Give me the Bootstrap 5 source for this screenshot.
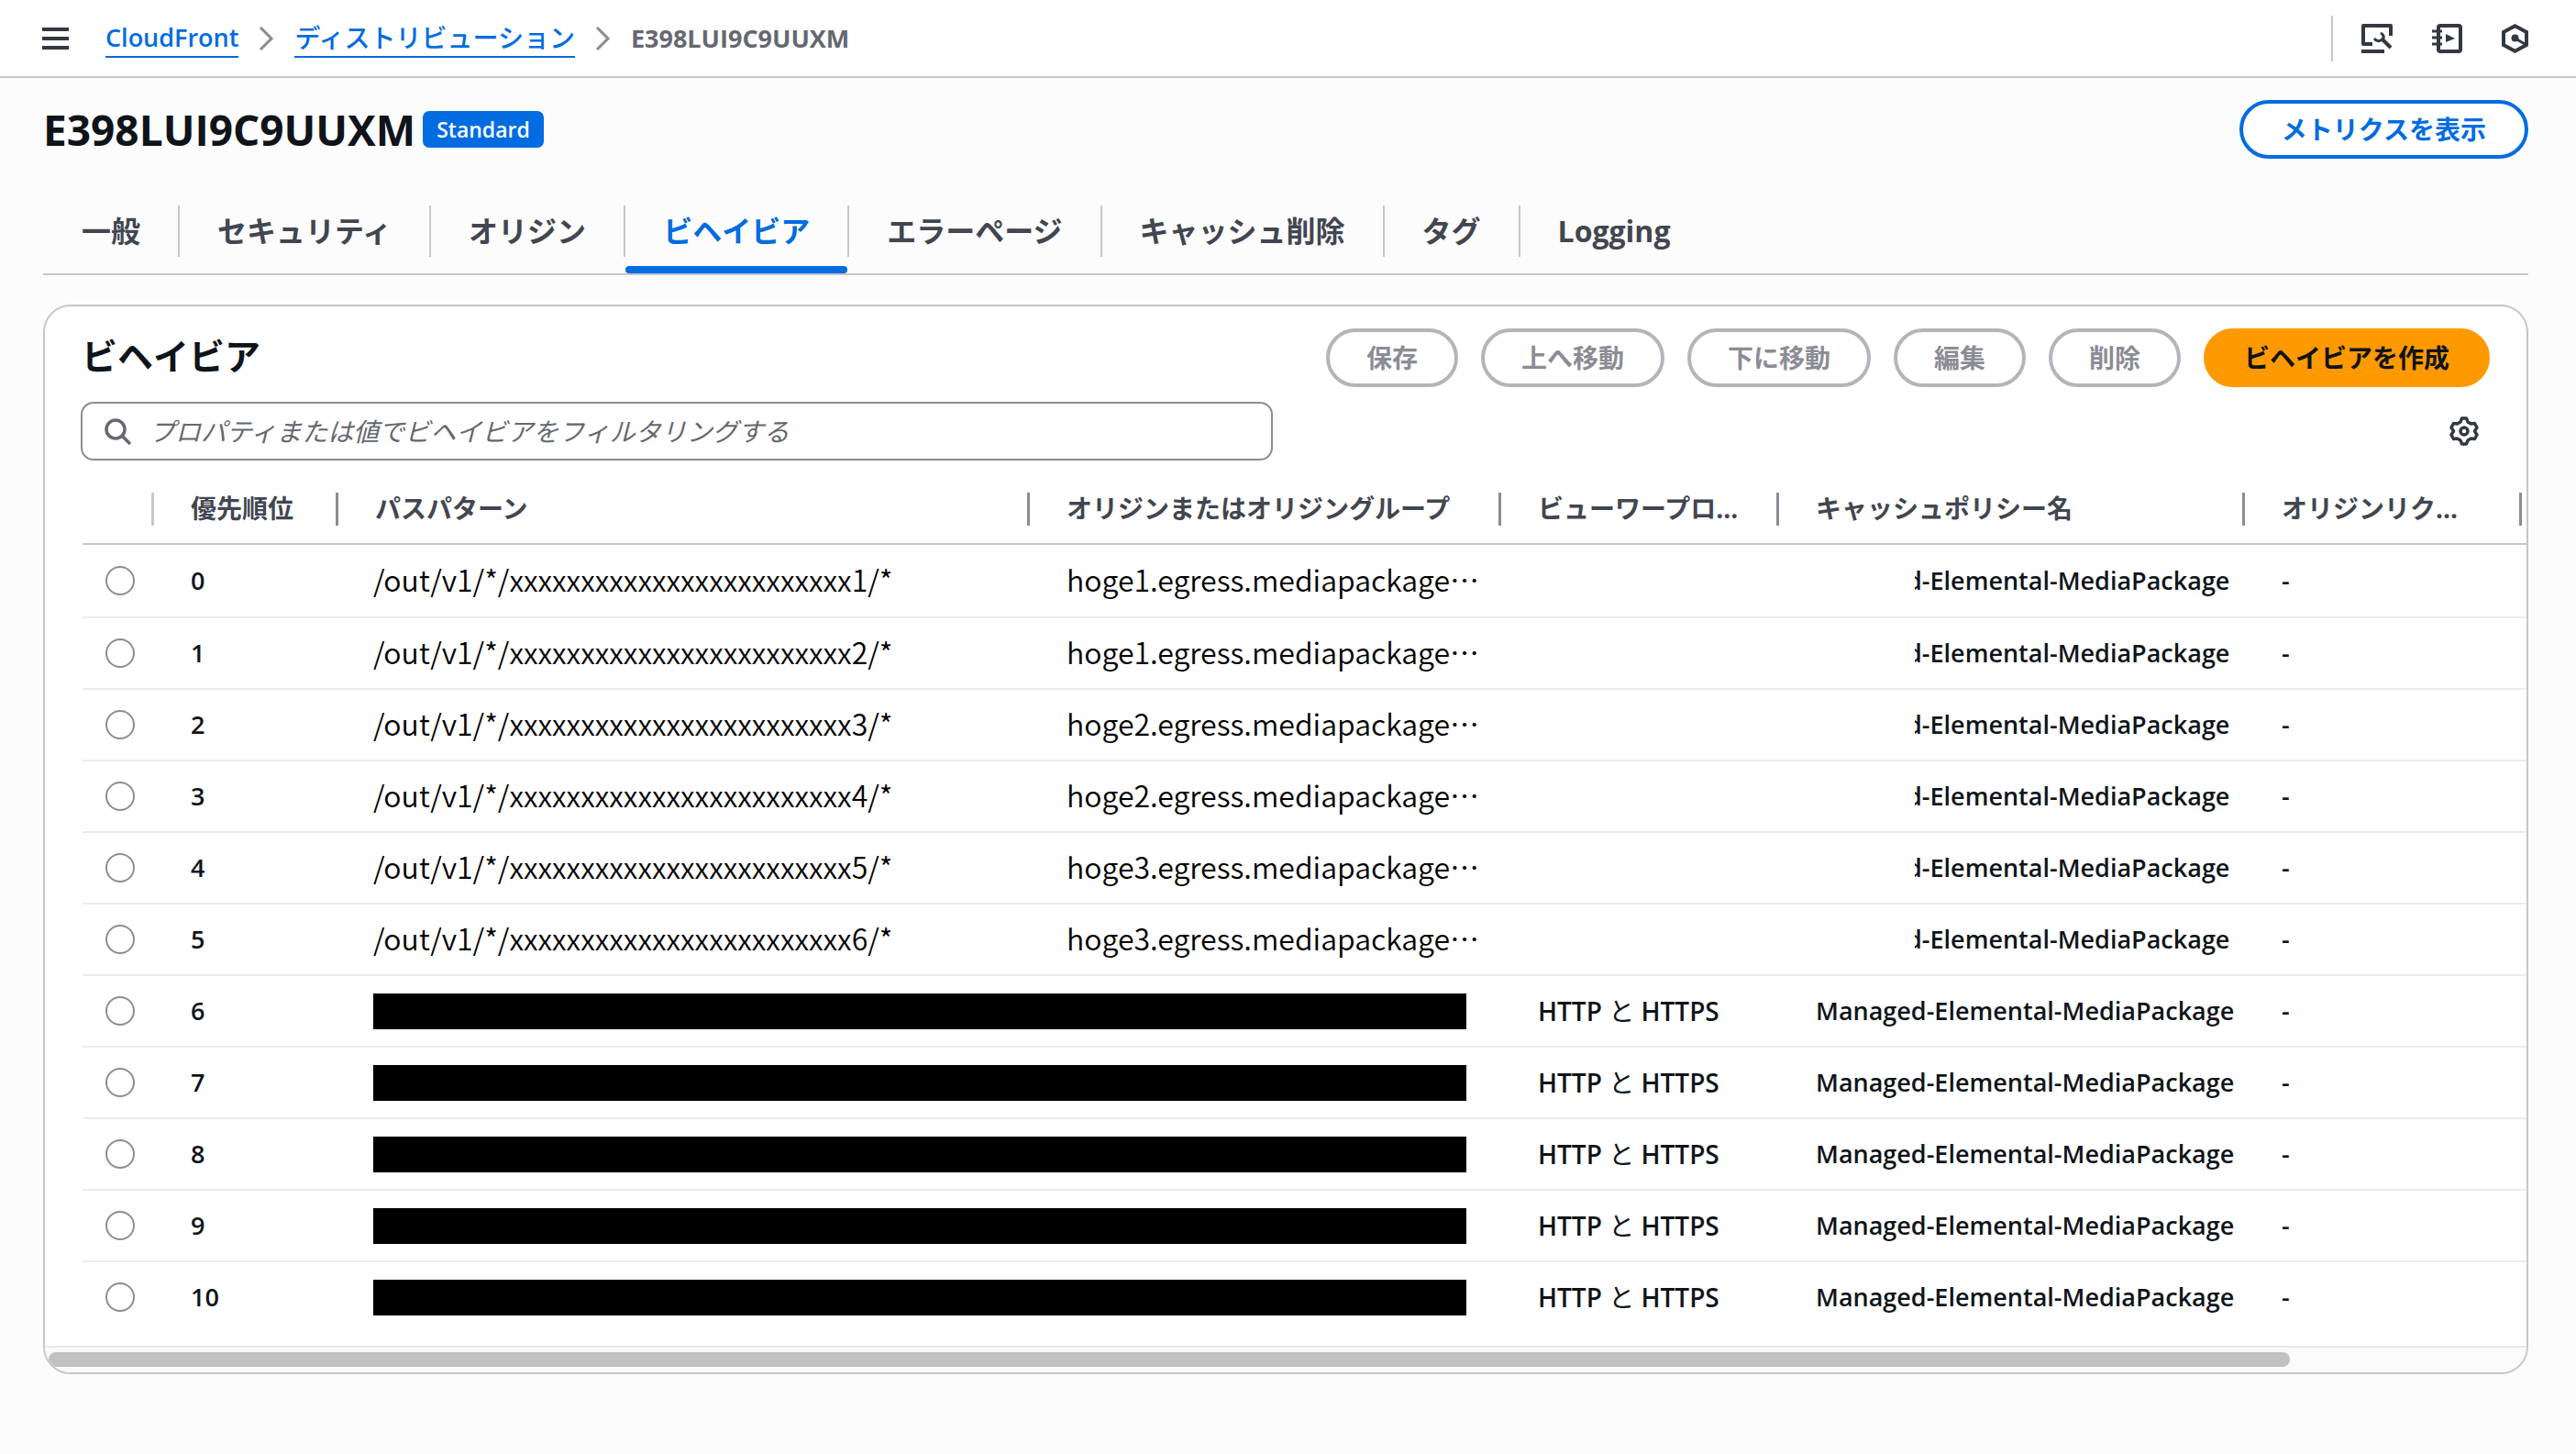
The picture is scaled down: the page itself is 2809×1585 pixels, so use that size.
<!DOCTYPE html>
<html lang="ja">
<head>
<meta charset="utf-8">
<meta name="viewport" content="width=device-width, initial-scale=1">
<title>CloudFront - E398LUI9C9UUXM</title>
<link rel="stylesheet" href="https://cdn.jsdelivr.net/npm/bootstrap@5.3.0/dist/css/bootstrap.min.css">
<style>
  :root { --blue:#006ce0; --ink:#0f141a; --slate:#424650; --muted:#656871; --gray:#8c8c94; --line:#c6c6cd; }
  body { background:#fcfcfd; color:var(--ink); font-family:"Open Sans","Noto Sans CJK JP",sans-serif; font-size:28px; line-height:40px; font-weight:500; }
  svg { display:block; flex:none; }
  .icon-btn { background:none; border:0; padding:0; color:#333843; }
  .topbar { background:#fff; border-bottom:2px solid var(--line); height:85px; padding:0 52px 0 46px; }
  .crumbs { gap:22px; margin-left:40px; }
  .crumbs a { color:var(--blue); text-decoration:none; border-bottom:2px solid var(--blue); }
  .crumbs .here { color:var(--muted); font-size:27px; font-weight:700; }
  .crumbs .service { font-size:27px; font-weight:600; }
  .tools { gap:43px; }
  .tools .rule { width:2px; height:50px; background:var(--line); margin-right:-12px; }
  .page { padding:24px 52px 40px 47px; }
  .page-title { font-size:46px; line-height:64px; font-weight:700; }
  .tier { background:var(--blue); font-size:23px; line-height:40px; font-weight:600; border-radius:7px; padding:0 15px; }
  .pill { border:4px solid; border-radius:32px; height:64px; padding:0 40px; font-size:28px; line-height:40px; font-weight:700; white-space:nowrap; }
  .pill-blue { color:var(--blue); border-color:var(--blue); background:#fff; padding:0 42px; }
  .pill:disabled { color:var(--gray); border-color:#b4b4bb; background:#fff; opacity:1; }
  .pill-orange { color:var(--ink); background:#f90; border-color:#f90; }
  .tabs { margin-top:51px; border-bottom:2px solid var(--line); font-size:32px; }
  .tabs li { padding-bottom:18px; position:relative; }
  .tabs a { display:block; line-height:56px; padding:0 41px; color:var(--slate); font-weight:700; text-decoration:none; }
  .tabs li:first-child a { padding-left:42px; }
  .tabs li + li a { border-left:2px solid var(--line); }
  .tabs .on a { color:var(--blue); }
  .tabs .on::after { content:""; position:absolute; left:2px; right:0; bottom:0; height:8px; border-radius:4px; background:var(--blue); }
  .panel { margin-top:32px; background:#fff; border:2px solid var(--line); border-radius:30px; overflow:hidden; }
  .panel-head { padding:24px 40px 0 40px; }
  .panel-title { font-size:39px; line-height:60px; font-weight:700; }
  .actions { gap:25px; }
  .filter-row { padding:16px 52px 0 39px; }
  .filter { border:2px solid var(--gray); border-radius:14px; height:64px; width:1300px; padding:0 24px; gap:20px; color:var(--muted); }
  .filter input { border:0; outline:0; background:none; padding:0; font-style:italic; color:var(--muted); font-weight:400; }
  .filter input::placeholder { color:var(--muted); opacity:1; }
  .grid-wrap { padding-left:41px; margin-top:16px; }
  .grid { table-layout:fixed; width:100%; white-space:nowrap; }
  .grid th { height:75px; padding:0 0 2px 40px; border-bottom:2px solid var(--line); color:var(--slate); font-weight:700; position:relative; overflow:hidden; }
  .grid th:not(:last-child)::after { content:""; position:absolute; right:0; top:19px; width:3px; height:36px; background:var(--gray); }
  .grid th:first-child::after { background:var(--line); }
  .grid td { height:78px; padding:0 0 0 40px; border-bottom:2px solid #ebebf0; font-size:27px; font-weight:600; overflow:hidden; }
  .grid tbody tr:first-child td { height:80px; }
  .grid tbody tr:last-child td { border-bottom-color:#fff; }
  .grid td:first-child { padding-left:25px; }
  .grid td:nth-child(3) { padding-left:38px; }
  .grid input { appearance:none; display:block; width:32px; height:32px; margin:0; border:2px solid var(--gray); border-radius:50%; background:#fff; }
  .grid td.plain { font-family:"Noto Sans CJK JP",sans-serif; font-size:32px; font-weight:350; color:#000; padding-bottom:4px; }
  .grid td.proto { font-size:28px; }
  .redacted { height:39px; margin-right:38px; background:#000; }
  .cut { position:relative; display:block; margin-left:99px; }
  .cut::before { content:""; position:absolute; left:0; top:0; bottom:0; width:9px; background:#fff; }
  .scroll-track { margin-top:13px; height:29px; border-top:2px solid #e8e8e8; background:#fafafa; padding:5px 4px; }
  .scroll-thumb { height:16px; width:90.6%; border-radius:8px; background:#c1c1c1; }
</style>
</head>
<body>
<header class="topbar d-flex align-items-center">
  <button class="icon-btn" type="button" aria-label="メニュー">
    <svg width="29" height="24" viewBox="0 0 29 24" fill="currentColor"><path d="M0 0h29v4H0zM0 10h29v4H0zM0 20h29v4H0z"/></svg>
  </button>
  <nav class="crumbs d-flex align-items-center" aria-label="パンくずリスト">
    <a class="service" href="#">CloudFront</a>
    <svg width="17" height="26" viewBox="0 0 17 26" fill="none" stroke="#8c8c94" stroke-width="3"><path d="M2 1l12 12L2 25"/></svg>
    <a href="#">ディストリビューション</a>
    <svg width="17" height="26" viewBox="0 0 17 26" fill="none" stroke="#8c8c94" stroke-width="3"><path d="M2 1l12 12L2 25"/></svg>
    <span class="here">E398LUI9C9UUXM</span>
  </nav>
  <div class="tools d-flex align-items-center ms-auto">
    <span class="rule"></span>
    <button class="icon-btn" type="button" aria-label="診断">
      <svg width="34" height="32" viewBox="0 0 34 32" fill="none" stroke="currentColor" stroke-width="4" stroke-linejoin="round"><path d="M12 22H2V2h30v11M0 30h25"/><path d="M14 16q3 4 7 2 4-2 3-5-1-2-3-3" stroke-width="3"/><path d="M23 17l9 9"/></svg>
    </button>
    <button class="icon-btn" type="button" aria-label="チュートリアル">
      <svg width="33" height="32" viewBox="0 0 33 32" fill="none" stroke="currentColor" stroke-width="4"><rect x="7" y="2" width="24" height="28" rx="2"/><path d="M0 8h11M0 15h11M0 22h11" stroke-width="3"/><path d="M15 11v9l10-4z" fill="currentColor" stroke="none"/></svg>
    </button>
    <button class="icon-btn" type="button" aria-label="アシスタント">
      <svg width="29" height="32" viewBox="0 0 29 32" fill="none" stroke="currentColor" stroke-width="4"><path d="M14.500 2.300L27 9v14l-12.500 6.700L2 23V9z"/><circle cx="14.500" cy="15.500" r="4" fill="currentColor" stroke="none"/><path d="M15 16l11 6.500" stroke-width="3"/></svg>
    </button>
  </div>
</header>
<main class="page">
  <div class="d-flex align-items-center">
    <h1 class="page-title mb-0">E398LUI9C9UUXM</h1>
    <span class="tier text-white ms-2">Standard</span>
    <button class="pill pill-blue ms-auto" type="button">メトリクスを表示</button>
  </div>
  <ul class="tabs d-flex list-unstyled mb-0">
    <li><a href="#">一般</a></li>
    <li><a href="#">セキュリティ</a></li>
    <li><a href="#">オリジン</a></li>
    <li class="on"><a href="#" aria-current="page">ビヘイビア</a></li>
    <li><a href="#">エラーページ</a></li>
    <li><a href="#">キャッシュ削除</a></li>
    <li><a href="#">タグ</a></li>
    <li><a href="#">Logging</a></li>
  </ul>
  <section class="panel">
    <div class="panel-head d-flex align-items-start justify-content-between">
      <h2 class="panel-title mb-0">ビヘイビア</h2>
      <div class="actions d-flex">
        <button class="pill" type="button" disabled>保存</button>
        <button class="pill" type="button" disabled>上へ移動</button>
        <button class="pill" type="button" disabled>下に移動</button>
        <button class="pill" type="button" disabled>編集</button>
        <button class="pill" type="button" disabled>削除</button>
        <button class="pill pill-orange" type="button">ビヘイビアを作成</button>
      </div>
    </div>
    <div class="filter-row d-flex align-items-center justify-content-between">
      <label class="filter d-flex align-items-center">
        <svg width="29" height="29" viewBox="0 0 29 29" fill="none" stroke="currentColor" stroke-width="3.500"><circle cx="12" cy="12" r="10"/><path d="M19 19l9 9"/></svg>
        <input class="flex-grow-1" type="search" placeholder="プロパティまたは値でビヘイビアをフィルタリングする" aria-label="ビヘイビアをフィルタリング">
      </label>
      <button class="icon-btn" type="button" aria-label="設定">
        <svg width="32" height="32" viewBox="0 0 32 32" fill="none" stroke="currentColor" stroke-width="3.500" stroke-linejoin="round"><path d="M13.500 2h5l1.500 4 3.500 2 4-.5 2.500 4.500-2.500 4 2.500 4-2.500 4.500-4-.5-3.500 2-1.500 4h-5l-1.500-4-3.500-2-4 .5L2 20l2.500-4L2 12l2.500-4.500 4 .5L12 6z"/><circle cx="16" cy="16" r="4"/></svg>
      </button>
    </div>
    <div class="grid-wrap">
      <table class="grid">
        <colgroup><col style="width:78px"><col style="width:201px"><col style="width:754px"><col style="width:514px"><col style="width:303px"><col style="width:508px"><col style="width:302px"><col></colgroup>
        <thead>
          <tr><th></th><th>優先順位</th><th>パスパターン</th><th>オリジンまたはオリジングループ</th><th>ビューワープロ...</th><th>キャッシュポリシー名</th><th>オリジンリク...</th><th></th></tr>
        </thead>
        <tbody>
          <tr><td><input type="radio" name="b" aria-label="0"></td><td>0</td><td class="plain">/out/v1/*/xxxxxxxxxxxxxxxxxxxxxxxx1/*</td><td class="plain">hoge1.egress.mediapackage⋯</td><td></td><td><span class="cut">d-Elemental-MediaPackage</span></td><td>-</td><td></td></tr>
          <tr><td><input type="radio" name="b" aria-label="1"></td><td>1</td><td class="plain">/out/v1/*/xxxxxxxxxxxxxxxxxxxxxxxx2/*</td><td class="plain">hoge1.egress.mediapackage⋯</td><td></td><td><span class="cut">d-Elemental-MediaPackage</span></td><td>-</td><td></td></tr>
          <tr><td><input type="radio" name="b" aria-label="2"></td><td>2</td><td class="plain">/out/v1/*/xxxxxxxxxxxxxxxxxxxxxxxx3/*</td><td class="plain">hoge2.egress.mediapackage⋯</td><td></td><td><span class="cut">d-Elemental-MediaPackage</span></td><td>-</td><td></td></tr>
          <tr><td><input type="radio" name="b" aria-label="3"></td><td>3</td><td class="plain">/out/v1/*/xxxxxxxxxxxxxxxxxxxxxxxx4/*</td><td class="plain">hoge2.egress.mediapackage⋯</td><td></td><td><span class="cut">d-Elemental-MediaPackage</span></td><td>-</td><td></td></tr>
          <tr><td><input type="radio" name="b" aria-label="4"></td><td>4</td><td class="plain">/out/v1/*/xxxxxxxxxxxxxxxxxxxxxxxx5/*</td><td class="plain">hoge3.egress.mediapackage⋯</td><td></td><td><span class="cut">d-Elemental-MediaPackage</span></td><td>-</td><td></td></tr>
          <tr><td><input type="radio" name="b" aria-label="5"></td><td>5</td><td class="plain">/out/v1/*/xxxxxxxxxxxxxxxxxxxxxxxx6/*</td><td class="plain">hoge3.egress.mediapackage⋯</td><td></td><td><span class="cut">d-Elemental-MediaPackage</span></td><td>-</td><td></td></tr>
          <tr><td><input type="radio" name="b" aria-label="6"></td><td>6</td><td colspan="2"><div class="redacted"></div></td><td class="proto">HTTP <span class="fw-normal">と</span> HTTPS</td><td>Managed-Elemental-MediaPackage</td><td>-</td><td></td></tr>
          <tr><td><input type="radio" name="b" aria-label="7"></td><td>7</td><td colspan="2"><div class="redacted"></div></td><td class="proto">HTTP <span class="fw-normal">と</span> HTTPS</td><td>Managed-Elemental-MediaPackage</td><td>-</td><td></td></tr>
          <tr><td><input type="radio" name="b" aria-label="8"></td><td>8</td><td colspan="2"><div class="redacted"></div></td><td class="proto">HTTP <span class="fw-normal">と</span> HTTPS</td><td>Managed-Elemental-MediaPackage</td><td>-</td><td></td></tr>
          <tr><td><input type="radio" name="b" aria-label="9"></td><td>9</td><td colspan="2"><div class="redacted"></div></td><td class="proto">HTTP <span class="fw-normal">と</span> HTTPS</td><td>Managed-Elemental-MediaPackage</td><td>-</td><td></td></tr>
          <tr><td><input type="radio" name="b" aria-label="10"></td><td>10</td><td colspan="2"><div class="redacted"></div></td><td class="proto">HTTP <span class="fw-normal">と</span> HTTPS</td><td>Managed-Elemental-MediaPackage</td><td>-</td><td></td></tr>
        </tbody>
      </table>
    </div>
    <div class="scroll-track"><div class="scroll-thumb"></div></div>
  </section>
</main>
<script src="https://cdn.jsdelivr.net/npm/bootstrap@5.3.0/dist/js/bootstrap.bundle.min.js"></script>
</body>
</html>
